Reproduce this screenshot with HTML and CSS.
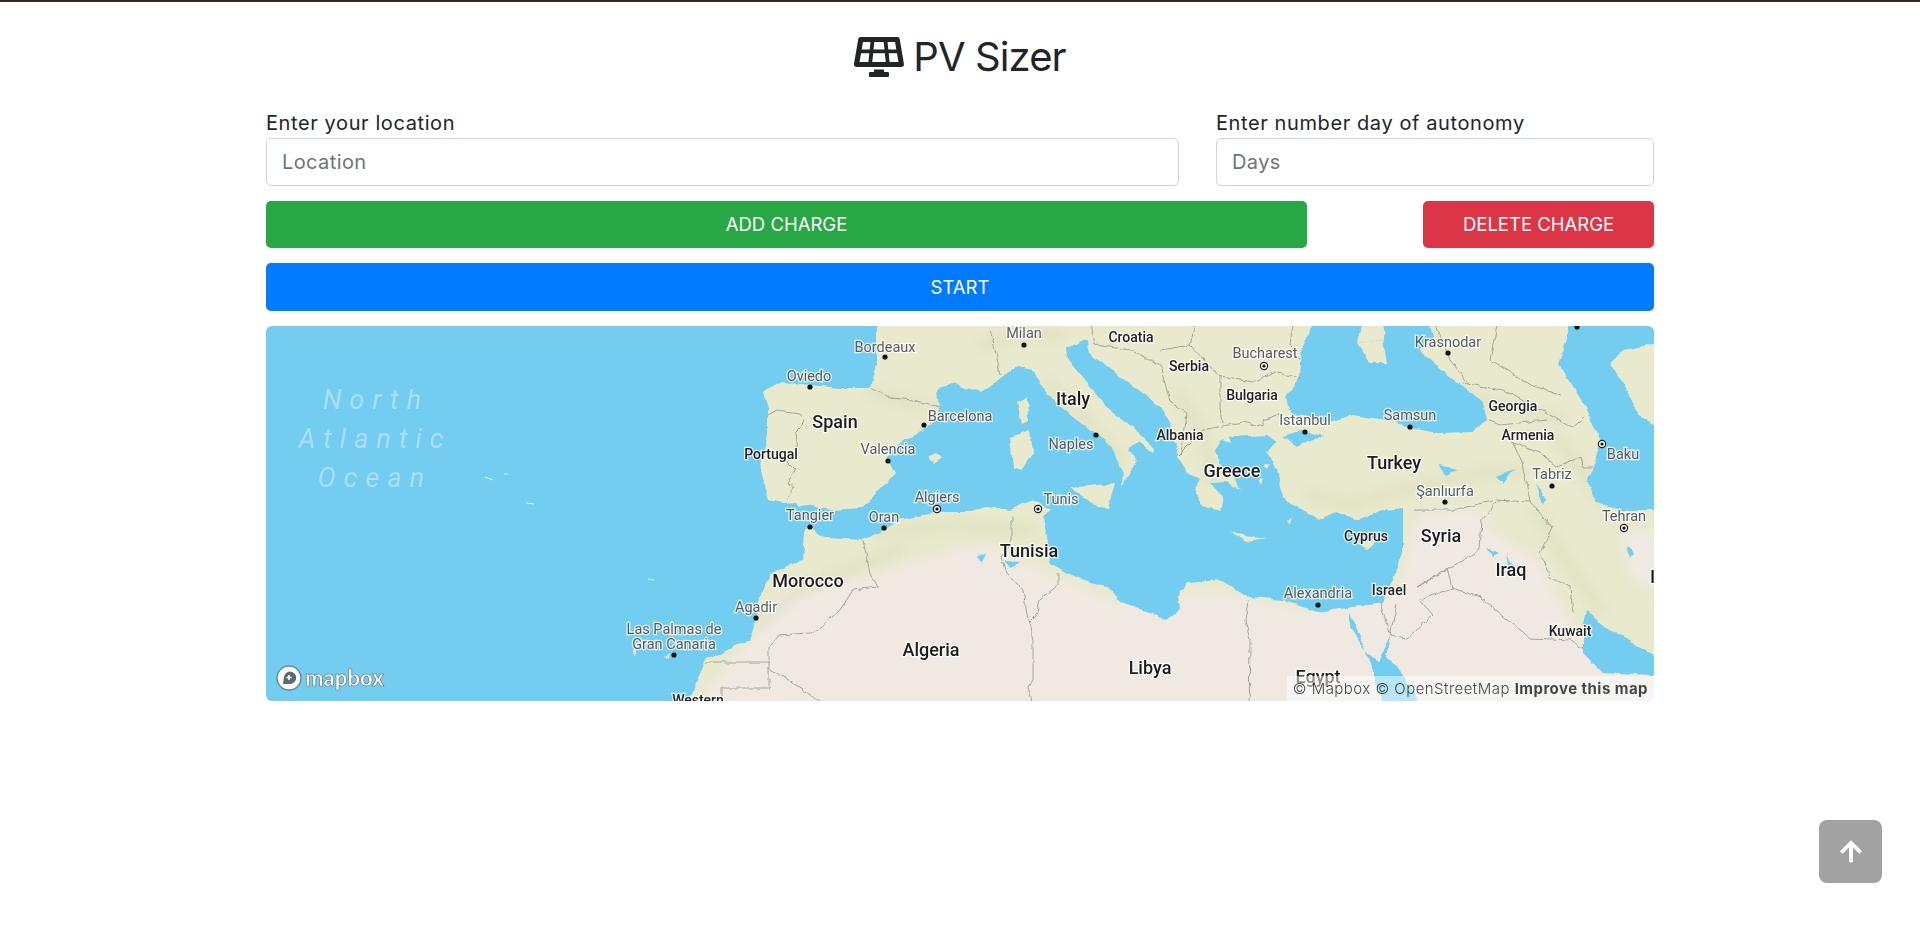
FILE: index.html
```html
<!DOCTYPE html>
<html>
  <head>
    <title>PV Sizer</title>
    <link rel="stylesheet" href="styles.css">
  </head>
  <body>
    <div class="page">
      <h1 class="title">
        <svg class="title-icon" viewBox="0 0 640 512"><path d="M431.98 448.01l-47.97.05V416h-128v32.21l-47.98.05c-8.82.01-15.97 7.16-15.98 15.99l-.05 31.73c-.01 8.85 7.17 16.03 16.02 16.02l223.96-.26c8.82-.01 15.97-7.16 15.98-15.98l.04-31.73c.01-8.85-7.17-16.03-16.02-16.02zM585.2 26.74C582.58 11.31 568.99 0 553.06 0H86.93C71 0 57.41 11.31 54.79 26.74-3.32 369.16.04 348.08.03 352c-.03 17.32 14.29 32 32.6 32h574.74c18.23 0 32.51-14.56 32.59-31.79.02-4.08 3.35 16.95-54.76-325.47zM259.83 64h120.33l9.77 96H250.06l9.77-96zm-75.17 256H71.09L90.1 208h105.97l-11.41 112zm16.29-160H98.24l16.29-96h96.19l-9.77 96zm32.82 160l11.4-112h149.65l11.4 112H233.77zm195.5-256h96.19l16.29 96H439.04l-9.77-96zm26.06 256l-11.4-112H549.9l19 112H455.33z"/></svg>
        PV Sizer
      </h1>

      <div class="fields">
        <div>
          <label class="field-label" for="location">Enter your location</label>
          <input class="field-input" id="location" type="text" placeholder="Location" />
        </div>
        <div>
          <label class="field-label" for="days">Enter number day of autonomy</label>
          <input class="field-input" id="days" type="text" placeholder="Days" />
        </div>
      </div>

      <div class="charge-row">
        <button class="btn btn-add">ADD CHARGE</button>
        <button class="btn btn-delete">DELETE CHARGE</button>
      </div>
      <button class="btn btn-start">START</button>

      <div class="map">
        <svg class="map-svg" viewBox="266 326 1388 375">
          <defs>
            <filter id="soft" filterUnits="userSpaceOnUse" x="200" y="280" width="1520" height="480" color-interpolation-filters="sRGB"><feGaussianBlur stdDeviation="7" /></filter>
            <filter id="softer" filterUnits="userSpaceOnUse" x="200" y="280" width="1520" height="480" color-interpolation-filters="sRGB"><feGaussianBlur stdDeviation="4" /></filter>
            <filter id="coast" filterUnits="userSpaceOnUse" x="200" y="280" width="1520" height="480" color-interpolation-filters="sRGB">
              <feTurbulence type="fractalNoise" baseFrequency="0.07" numOctaves="3" seed="4" result="n" />
              <feDisplacementMap in="SourceGraphic" in2="n" scale="6" xChannelSelector="R" yChannelSelector="G" />
            </filter>
            <filter id="wiggle" filterUnits="userSpaceOnUse" x="200" y="280" width="1520" height="480" color-interpolation-filters="sRGB">
              <feTurbulence type="fractalNoise" baseFrequency="0.12" numOctaves="2" seed="9" result="n" />
              <feDisplacementMap in="SourceGraphic" in2="n" scale="5" xChannelSelector="G" yChannelSelector="R" />
            </filter>
          </defs>

          <!-- land base, desert on top of it -->
          <rect class="land" x="250" y="310" width="1420" height="410" />
          <g class="sand" filter="url(#soft)">
            <path d="M690 710L749 640L783 590L820 588L887 570L953 550L987 543L1047 573L1110 600L1220 590L1300 610L1400 590L1407 547L1420 513L1483 508L1490 530L1537 558L1553 590L1573 625L1590 650L1670 690L1670 740L690 740Z" />
            <path d="M1620 530L1670 530L1670 590L1630 580Z" />
          </g>
          <g class="relief" filter="url(#softer)">
            <path d="M760 625L800 590L850 570L900 548" />
            <path d="M880 533L950 525L1030 530" />
            <path d="M872 392L905 402L937 410" />
            <path d="M985 345L1020 332L1060 335" />
            <path d="M1050 385L1085 420L1120 460" />
            <path d="M1180 395L1205 440L1212 480" />
            <path d="M1310 495L1350 505L1400 490L1470 475L1520 470" />
            <path d="M1440 385L1500 405L1560 420" />
            <path d="M1535 510L1565 560L1600 610" />
            <path d="M1560 440L1600 500L1654 505" />
          </g>

          <!-- seas -->
          <g class="water" filter="url(#coast)">
            <path d="M250 310L877 310L877 360L870 388L840 388L810 385L780 382L763 392L768 410L768 433L760 470L768 500L783 503L795 502L803 510L808 525L805 533L803 560L771 573L760 597L756 620L749 640L706 660L694 687L685 720L250 720Z" />
            <path d="M800 506L807 505L830 510L863 508L880 490L895 473L887 457L903 440L922 432L940 417L937 390L953 383L980 392L1000 378L1017 367L1033 370L1047 395L1073 417L1097 435L1113 450L1123 470L1122 487L1137 460L1128 448L1140 442L1153 452L1155 448L1133 427L1113 413L1087 383L1068 360L1067 348L1087 340L1090 353L1113 370L1140 393L1160 407L1170 423L1177 457L1187 472L1200 478L1193 490L1203 507L1220 512L1223 497L1210 483L1227 482L1235 488L1225 470L1220 463L1215 450L1220 440L1232 443L1230 437L1267 435L1277 442L1267 453L1277 467L1280 487L1287 503L1307 513L1320 520L1335 512L1360 520L1383 510L1403 508L1403 527L1403 553L1393 577L1383 603L1353 607L1317 612L1283 600L1250 597L1220 580L1187 583L1178 597L1180 610L1167 620L1153 613L1120 603L1107 587L1077 578L1050 563L1047 537L1043 517L1050 508L1033 500L1010 510L987 507L967 512L940 512L897 520L880 533L863 540L827 538L815 530L808 525Z" />
            <path d="M1320 310L1302 347L1300 377L1285 395L1292 413L1327 423L1353 415L1387 420L1410 428L1437 433L1470 432L1487 420L1483 403L1463 387L1433 363L1420 350L1432 338L1425 310L1385 310L1383 340L1357 343L1365 310Z" />
            <path d="M1567 310L1670 310L1670 340L1625 350L1610 363L1623 383L1640 417L1670 435L1670 510L1620 510L1597 503L1588 480L1593 467L1600 443L1590 417L1580 397L1558 363L1567 340Z" />
            <path d="M1350 613L1350 627L1364 649L1378 662L1390 635L1386 657L1400 670L1410 685L1425 720L1388 720L1374 674L1368 655Z" />
            <path d="M1587 610L1583 630L1583 653L1603 673L1670 677L1670 668L1630 640L1603 627Z" />
            <path d="M1283 437L1305 430L1322 436L1297 446Z" />
            <path d="M1497 477L1515 469L1503 484Z" />
            <path d="M1535 483L1546 500L1542 505Z" />
            <path d="M1440 465L1458 470L1445 476Z" />
            <path d="M1507 553L1514 568L1510 572Z" />
            <path d="M1486 548L1498 553L1492 556Z" />
            <path d="M1005 561L1020 562L1012 568Z" />
            <path d="M978 556L986 554L982 562Z" />
            <path d="M1627 546L1636 552L1630 558Z" />
          </g>

          <!-- islands -->
          <g class="land" filter="url(#coast)">
            <path d="M1017 403L1027 397L1028 420L1022 423Z" />
            <path d="M1010 437L1030 430L1033 453L1022 470L1013 467Z" />
            <path d="M1070 488L1115 483L1108 508L1097 507Z" />
            <path d="M928 457L937 453L943 458L937 463Z" />
            <path d="M1228 533L1267 538L1247 541Z" />
            <path d="M1357 543L1383 538L1368 548Z" />
            <path d="M1357 343L1383 340L1387 363L1370 363Z" />
            <path d="M1225 468L1240 490L1232 484Z" />
            <path d="M1288 522L1293 517L1291 524Z" />
            <path d="M1263 465L1270 463L1267 469Z" />
            <path d="M1258 480L1263 479L1261 486Z" />
            <path d="M631 652L636 650L634 657Z" />
            <path d="M664 656L670 651L669 659Z" />
          </g>
          <g class="azores">
            <path d="M485 477L493 480" />
            <path d="M504 474L508 474" />
            <path d="M526 503L534 504" />
            <path d="M648 579L654 580" />
          </g>

          <!-- borders -->
          <g class="borders" filter="url(#wiggle)">
            <path d="M870 388L890 398L913 400L940 407" />
            <path d="M990 330L997 357L1000 375" />
            <path d="M768 415L777 410L800 413L805 422L795 432L797 453L788 463L795 470L788 483L793 487L787 500" />
            <path d="M863 540L870 573L878 587L853 590L840 610L820 628L810 633L778 635L769 648L769 688L722 688L722 720" />
            <path d="M706 662L769 662" />
            <path d="M769 668L820 701" />
            <path d="M1012 517L1012 540L1002 557L1007 573L1023 590L1028 620L1033 640L1033 680L1028 687L1037 720" />
            <path d="M1058 573L1058 585L1040 600L1037 613L1028 622" />
            <path d="M1248 600L1245 620L1250 640L1249 720" />
            <path d="M1380 603L1390 635L1397 603" />
            <path d="M1413 510L1453 510L1497 500L1530 502" />
            <path d="M1497 502L1482 520L1480 550L1417 587" />
            <path d="M1417 587L1447 568L1452 588L1420 600L1433 615L1407 638L1390 635" />
            <path d="M1452 588L1480 597L1530 638L1570 640L1582 648" />
            <path d="M1530 502L1552 527L1540 553L1550 577L1570 587L1573 613" />
            <path d="M1513 443L1522 463L1530 502" />
            <path d="M1503 430L1513 443L1540 453L1557 467L1580 457L1582 467L1593 467" />
            <path d="M1463 383L1503 390L1550 415L1572 428L1585 417" />
            <path d="M1487 420L1500 425L1547 420" />
            <path d="M1220 377L1253 382L1273 372L1300 378" />
            <path d="M1178 455L1203 430L1243 422L1263 427L1263 420L1282 413" />
            <path d="M1220 407L1222 423" />
            <path d="M1170 402L1187 413L1183 443L1180 455" />
            <path d="M1087 310L1095 345L1130 350L1160 365L1170 402" />
            <path d="M1160 350L1190 345L1220 377L1220 407" />
            <path d="M1190 345L1200 310" />
            <path d="M1295 310L1290 345L1300 360" />
            <path d="M1430 310L1450 360L1470 385" />
            <path d="M1500 310L1490 360L1530 385L1560 395" />
          </g>

          <!-- places -->
          <g class="dots">
            <circle cx="885" cy="357" r="2.6" />
            <circle cx="1024" cy="345" r="2.6" />
            <circle cx="924" cy="425" r="2.6" />
            <circle cx="1096" cy="435" r="2.6" />
            <circle cx="888" cy="461" r="2.6" />
            <circle cx="810" cy="387" r="2.6" />
            <circle cx="810" cy="527" r="2.6" />
            <circle cx="756" cy="618" r="2.6" />
            <circle cx="674" cy="655" r="2.6" />
            <circle cx="884" cy="528" r="2.6" />
            <circle cx="1305" cy="432" r="2.6" />
            <circle cx="1410" cy="427" r="2.6" />
            <circle cx="1448" cy="353" r="2.6" />
            <circle cx="1445" cy="502" r="2.6" />
            <circle cx="1552" cy="486" r="2.6" />
            <circle cx="1318" cy="605" r="2.6" />
            <circle cx="1577" cy="327" r="2.6" />
          </g>
          <g class="capitals">
            <circle cx="937" cy="509" r="3.6" />
            <circle cx="1038" cy="509" r="3.6" />
            <circle cx="1264" cy="366" r="3.6" />
            <circle cx="1602" cy="444" r="3.6" />
            <circle cx="1624" cy="528" r="3.6" />
          </g>
          <g class="dots">
            <circle cx="937" cy="509" r="1.6" />
            <circle cx="1038" cy="509" r="1.6" />
            <circle cx="1264" cy="366" r="1.6" />
            <circle cx="1602" cy="444" r="1.6" />
            <circle cx="1624" cy="528" r="1.6" />
          </g>

          <g class="ocean">
            <text x="376" y="409">North</text>
            <text x="375" y="448">Atlantic</text>
            <text x="375" y="487">Ocean</text>
          </g>
          <g class="city">
            <text x="885" y="352">Bordeaux</text>
            <text x="1024" y="338">Milan</text>
            <text x="960" y="421">Barcelona</text>
            <text x="1071" y="449">Naples</text>
            <text x="888" y="454">Valencia</text>
            <text x="809" y="381">Oviedo</text>
            <text x="810" y="520">Tangier</text>
            <text x="756" y="612">Agadir</text>
            <text x="674" y="634">Las Palmas de</text>
            <text x="674" y="649">Gran Canaria</text>
            <text x="937" y="502">Algiers</text>
            <text x="884" y="522">Oran</text>
            <text x="1061" y="504">Tunis</text>
            <text x="1265" y="358">Bucharest</text>
            <text x="1305" y="425">Istanbul</text>
            <text x="1410" y="420">Samsun</text>
            <text x="1448" y="347">Krasnodar</text>
            <text x="1623" y="459">Baku</text>
            <text x="1445" y="496">Şanlıurfa</text>
            <text x="1552" y="479">Tabriz</text>
            <text x="1624" y="521">Tehran</text>
            <text x="1318" y="598">Alexandria</text>
          </g>
          <g class="country-small">
            <text x="771" y="459">Portugal</text>
            <text x="1131" y="342">Croatia</text>
            <text x="1189" y="371">Serbia</text>
            <text x="1180" y="440">Albania</text>
            <text x="1252" y="400">Bulgaria</text>
            <text x="1513" y="411">Georgia</text>
            <text x="1528" y="440">Armenia</text>
            <text x="1366" y="541">Cyprus</text>
            <text x="1389" y="595">Israel</text>
            <text x="1570" y="636">Kuwait</text>
            <text x="698" y="705">Western</text>
          </g>
          <g class="country">
            <text x="835" y="428">Spain</text>
            <text x="1073" y="405">Italy</text>
            <text x="1232" y="477">Greece</text>
            <text x="808" y="587">Morocco</text>
            <text x="1029" y="557">Tunisia</text>
            <text x="931" y="656">Algeria</text>
            <text x="1150" y="674">Libya</text>
            <text x="1394" y="469">Turkey</text>
            <text x="1441" y="542">Syria</text>
            <text x="1511" y="576">Iraq</text>
            <text x="1318" y="683">Egypt</text>
            <text class="edge-label" x="1650" y="583">Iran</text>
          </g>
        </svg>

        <div class="map-logo">
          <svg class="map-logo-icon" viewBox="0 0 26 26">
            <circle cx="13" cy="13" r="12" fill="#fff" stroke="#6b8a96" stroke-width="1.5" />
            <path d="M7 19L8 11.5A6.2 6.2 0 1 1 14 19Z" fill="#5d6b72" />
            <path d="M13 10V15M10.500 12.500H15.500" stroke="#fff" stroke-width="1.6" />
          </svg>
          <span class="map-logo-text">mapbox</span>
        </div>
        <div class="map-credit">© Mapbox © OpenStreetMap <b>Improve this map</b></div>
      </div>
    </div>

    <button class="to-top">
      <svg class="to-top-icon" viewBox="0 0 448 512"><path d="M34.9 289.5l-22.2-22.2c-9.4-9.4-9.4-24.6 0-33.9L207 39c9.4-9.4 24.6-9.4 33.9 0l194.3 194.3c9.4 9.4 9.4 24.6 0 33.9L413 289.4c-9.5 9.5-25 9.3-34.3-.4L264 168.6V456c0 13.3-10.7 24-24 24h-32c-13.3 0-24-10.7-24-24V168.6L69.2 289.1c-9.3 9.8-24.8 10-34.3.4z"/></svg>
    </button>
  </body>
</html>
```

FILE: styles.css
```css
body {
  font-family: Inter, "Open Sans", sans-serif;
  color: #212529;
  background-color: #fff;
  margin: 0;
  border-top: 2px solid #33291f;
}

.page {
  width: 1388px;
  margin: 0 auto;
}

.title {
  display: flex;
  justify-content: center;
  align-items: center;
  gap: 9px;
  height: 60px;
  margin: 25px 0 0;
  font-size: 40px;
  font-weight: 400;
  line-height: 60px;
  letter-spacing: -0.9px;
}

.title-icon {
  width: 50px;
  height: 40px;
  fill: #212529;
}

.fields {
  display: grid;
  grid-template-columns: 913px 438px;
  justify-content: space-between;
  margin-top: 23px;
}

.field-label {
  display: block;
  height: 28px;
  font-size: 20px;
  line-height: 27px;
  letter-spacing: 0.6px;
}

.field-input {
  display: block;
  box-sizing: border-box;
  width: 100%;
  height: 48px;
  padding: 0 15px;
  font-family: inherit;
  font-size: 20px;
  letter-spacing: 0.4px;
  color: #495057;
  border: 1px solid #ced4da;
  border-radius: 5px;
}

.field-input::placeholder {
  color: #6c757d;
}

.charge-row {
  display: flex;
  justify-content: space-between;
  margin-top: 15px;
}

.btn {
  display: block;
  height: 47px;
  padding: 0 0 1px;
  font-family: inherit;
  font-size: 18.500px;
  color: #fff;
  border: none;
  border-radius: 5px;
}

.btn-add {
  width: 1041px;
  background-color: #28a745;
}

.btn-delete {
  width: 231px;
  background-color: #dc3545;
}

.btn-start {
  width: 100%;
  height: 48px;
  margin-top: 15px;
  background-color: #007bff;
}

.map {
  position: relative;
  height: 375px;
  margin-top: 15px;
  border-radius: 6px;
  overflow: hidden;
}

.map-svg {
  display: block;
  width: 1388px;
  height: 375px;
}

.land {
  fill: #e8e9cd;
}

.sand {
  fill: #f0e9e2;
}

.relief path {
  fill: none;
  stroke: #d6dbb3;
  stroke-width: 10;
  stroke-linecap: round;
  opacity: 0.4;
}

.water {
  fill: #73cdf0;
}

.azores path {
  stroke: #dff3fb;
  stroke-width: 1;
}

.borders path {
  fill: none;
  stroke: #9c9c98;
  stroke-width: 0.9;
}

.dots {
  fill: #111;
}

.capitals circle {
  fill: #fff;
  stroke: #222;
  stroke-width: 1.2;
}

.map-svg text {
  font-family: Roboto, sans-serif;
  text-anchor: middle;
  paint-order: stroke;
  stroke: rgba(255, 255, 255, 0.8);
  stroke-width: 2.5px;
}

.map-svg .edge-label {
  text-anchor: start;
}

.ocean text {
  font-size: 27px;
  font-style: italic;
  letter-spacing: 8px;
  fill: #a9def5;
  stroke: none;
}

.city text {
  font-size: 14.500px;
  fill: #565c5e;
}

.country-small text {
  font-size: 14px;
  font-weight: 500;
  fill: #222;
}

.country text {
  font-size: 18px;
  font-weight: 500;
  fill: #1c1c1c;
}

.map-logo {
  position: absolute;
  left: 10px;
  bottom: 10px;
  display: flex;
  align-items: center;
  gap: 3px;
}

.map-logo-icon {
  width: 26px;
  height: 26px;
}

.map-logo-text {
  font-family: Lato, sans-serif;
  font-size: 22px;
  font-weight: 900;
  line-height: 26px;
  color: #fff;
  -webkit-text-stroke: 0.6px #56676f;
}

.map-credit {
  position: absolute;
  right: 0;
  bottom: 0;
  height: 25px;
  padding: 0 6px;
  font-size: 15px;
  font-weight: 300;
  letter-spacing: 0.46px;
  line-height: 25px;
  white-space: nowrap;
  color: rgba(0, 0, 0, 0.72);
  background-color: rgba(255, 255, 255, 0.5);
}

.map-credit b {
  font-weight: 700;
}

.to-top {
  position: fixed;
  left: 1819px;
  top: 820px;
  display: flex;
  justify-content: center;
  align-items: center;
  width: 63px;
  height: 63px;
  padding: 0;
  background-color: #a2a2a2;
  border: none;
  border-radius: 8px;
}

.to-top-icon {
  width: 22px;
  height: 25px;
  fill: #fff;
}
```
